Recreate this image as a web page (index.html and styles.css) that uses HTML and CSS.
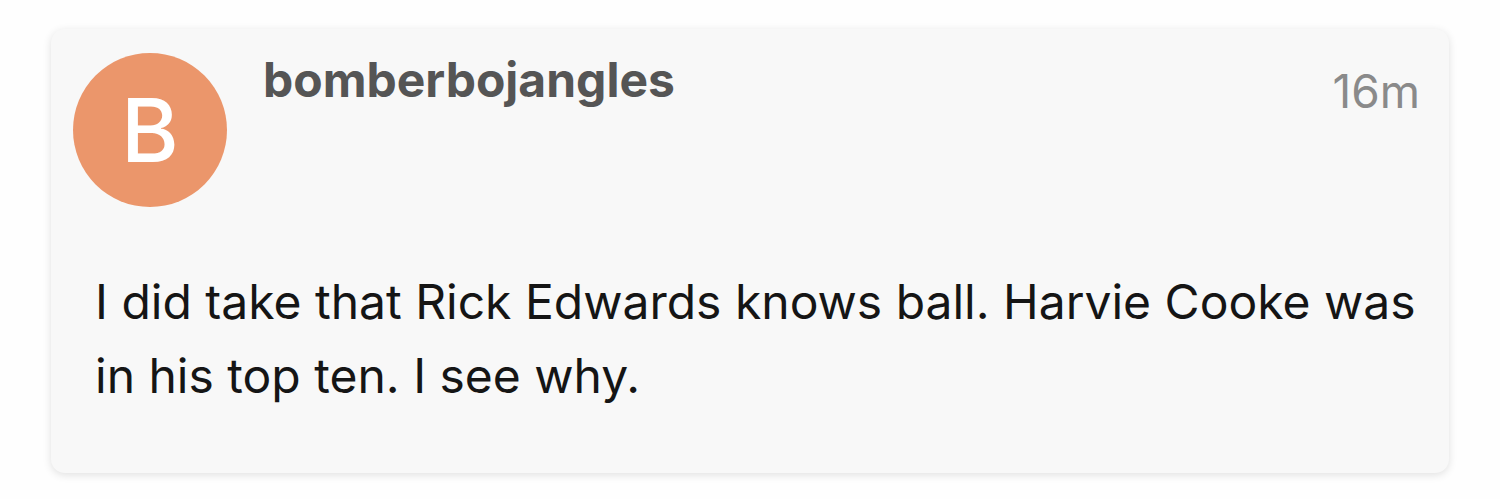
FILE: index.html
```html
<!DOCTYPE html>
<html lang="en">
<head>
    <meta charset="UTF-8">
    <meta name="viewport" content="width=device-width, initial-scale=1.0">
    <title>Comment</title>
    <link rel="stylesheet" href="styles.css">
</head>
<body>
    <div class="comment">
        <div class="comment-head">
            <div class="avatar">B</div>
            <div class="author">bomberbojangles</div>
            <div class="age">16m</div>
        </div>
        <p class="comment-text">I did take that Rick Edwards knows ball. Harvie Cooke was in his top ten. I see why.</p>
    </div>
</body>
</html>
```

FILE: styles.css
```css
/* Page */
body {
    margin: 0;
    padding: 29px 51px 26px;
    background: #fefefe;
    font-family: Inter, 'Liberation Sans', sans-serif;
}

/* Comment card */
.comment {
    background: #f8f8f8;
    border-radius: 14px;
    box-shadow: 0 2px 8px rgba(0, 0, 0, 0.12);
    padding: 24px 29px 40px 44px;
    height: 444px;
    box-sizing: border-box;
}

.comment-head {
    display: flex;
    align-items: flex-start;
    margin-left: -22px;
}

.avatar {
    width: 154px;
    height: 154px;
    flex-shrink: 0;
    border-radius: 50%;
    background: #eb966b;
    color: #fff;
    font-size: 88px;
    font-weight: 500;
    display: flex;
    align-items: center;
    justify-content: center;
}

.author {
    margin-left: 36px;
    margin-top: -3px;
    font-size: 48px;
    font-weight: 700;
    color: #555;
}

.age {
    margin-left: auto;
    margin-top: 10px;
    font-size: 46px;
    color: #8a8a8a;
}

/* Comment body */
.comment-text {
    margin: 58px -20px 0 0;
    font-size: 48px;
    line-height: 74px;
    color: #151515;
}
```
